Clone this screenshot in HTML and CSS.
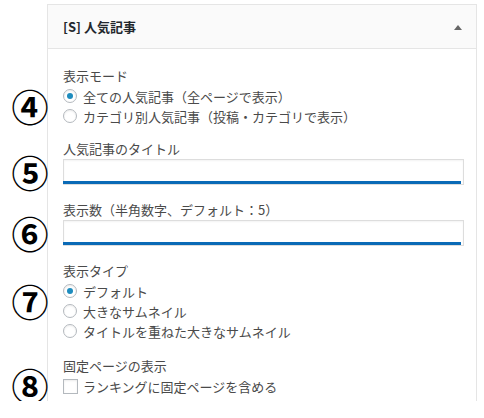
FILE: index.html
```html
<!DOCTYPE html>
<html lang="ja">
<head>
<meta charset="utf-8">
<title>[S] 人気記事</title>
<link rel="stylesheet" href="styles.css">
</head>
<body>
<div class="page">
  <div class="panel">
    <div class="panel-head">
      <h3 class="panel-title">[S] 人気記事</h3>
      <span class="toggle"></span>
    </div>
    <div class="panel-body">
      <div class="field field--first">
        <div class="label">表示モード</div>
        <div class="controls">
          <span class="num">④</span>
          <div class="option"><span class="radio is-checked"></span><span>全ての人気記事（全ページで表示）</span></div>
          <div class="option"><span class="radio"></span><span>カテゴリ別人気記事（投稿・カテゴリで表示）</span></div>
        </div>
      </div>
      <div class="field field--second">
        <div class="label">人気記事のタイトル</div>
        <div class="controls">
          <span class="num">⑤</span>
          <div class="input"></div>
        </div>
      </div>
      <div class="field">
        <div class="label">表示数（半角数字、デフォルト：5）</div>
        <div class="controls">
          <span class="num">⑥</span>
          <div class="input"></div>
        </div>
      </div>
      <div class="field">
        <div class="label">表示タイプ</div>
        <div class="controls">
          <span class="num num--upper">⑦</span>
          <div class="option"><span class="radio is-checked"></span><span>デフォルト</span></div>
          <div class="option"><span class="radio"></span><span>大きなサムネイル</span></div>
          <div class="option"><span class="radio"></span><span>タイトルを重ねた大きなサムネイル</span></div>
        </div>
      </div>
      <div class="field">
        <div class="label">固定ページの表示</div>
        <div class="controls">
          <span class="num num--lower">⑧</span>
          <div class="option option--check"><span class="checkbox"></span><span>ランキングに固定ページを含める</span></div>
        </div>
      </div>
    </div>
  </div>
</div>
</body>
</html>
```

FILE: styles.css
```css
html, body {
  margin: 0;
  background: #fff;
}

body {
  font-family: "Noto Sans CJK JP", "Noto Sans", sans-serif;
  color: #4a4a4a;
}

.page {
  padding: 4px 0 0 47px;
}

.panel {
  width: 430px;
  box-sizing: border-box;
  border: 1px solid #e5e5e5;
  border-bottom: none;
}

.panel-head {
  height: 43px;
  background: #fafafa;
  border-bottom: 1px solid #e5e5e5;
  display: flex;
  align-items: center;
  justify-content: space-between;
  padding: 0 14px 0 15px;
}

.panel-title {
  margin: 0;
  font-size: 13px;
  font-weight: 700;
  color: #23282d;
  line-height: 1;
}

.toggle {
  width: 0;
  height: 0;
  border-left: 4px solid transparent;
  border-right: 4px solid transparent;
  border-bottom: 5px solid #666;
  margin-top: 1px;
}

.panel-body {
  padding: 16px 12px 5px 15px;
  font-size: 13px;
}

.field {
  margin-top: 14px;
}

.field--first {
  margin-top: 0;
}

.field--second {
  margin-top: 12px;
}

.label {
  line-height: 21px;
  height: 21px;
  white-space: nowrap;
}

.controls {
  position: relative;
}

.num {
  position: absolute;
  left: -51px;
  top: 0;
  bottom: 0;
  width: 36px;
  display: flex;
  align-items: center;
  justify-content: center;
  font-size: 37px;
  font-weight: 700;
  color: #000;
  line-height: 1;
}

.num--upper {
  bottom: 20px;
}

.num--lower {
  top: -2px;
  bottom: 0;
}

.option {
  display: flex;
  align-items: center;
  height: 20px;
  gap: 6px;
  white-space: nowrap;
}

.option--check {
  gap: 5px;
}

.radio {
  width: 14px;
  height: 14px;
  box-sizing: border-box;
  border: 1px solid #b4b9be;
  border-radius: 50%;
  background: #fff;
  box-shadow: inset 0 1px 2px rgba(0, 0, 0, 0.08);
  display: flex;
  align-items: center;
  justify-content: center;
  flex: none;
}

.radio.is-checked::before {
  content: "";
  width: 6px;
  height: 6px;
  border-radius: 50%;
  background: #1e8cbe;
}

.checkbox {
  width: 15px;
  height: 15px;
  box-sizing: border-box;
  border: 1px solid #b4b9be;
  background: #fff;
  box-shadow: inset 0 1px 2px rgba(0, 0, 0, 0.08);
  flex: none;
}

.input {
  position: relative;
  height: 26px;
  box-sizing: border-box;
  border: 1px solid #ddd;
  background: #fff;
  box-shadow: inset 0 1px 2px rgba(0, 0, 0, 0.05);
}

.input::after {
  content: "";
  position: absolute;
  left: -1px;
  right: 2px;
  bottom: 0;
  height: 3px;
  background: #0a6ab6;
}
```
